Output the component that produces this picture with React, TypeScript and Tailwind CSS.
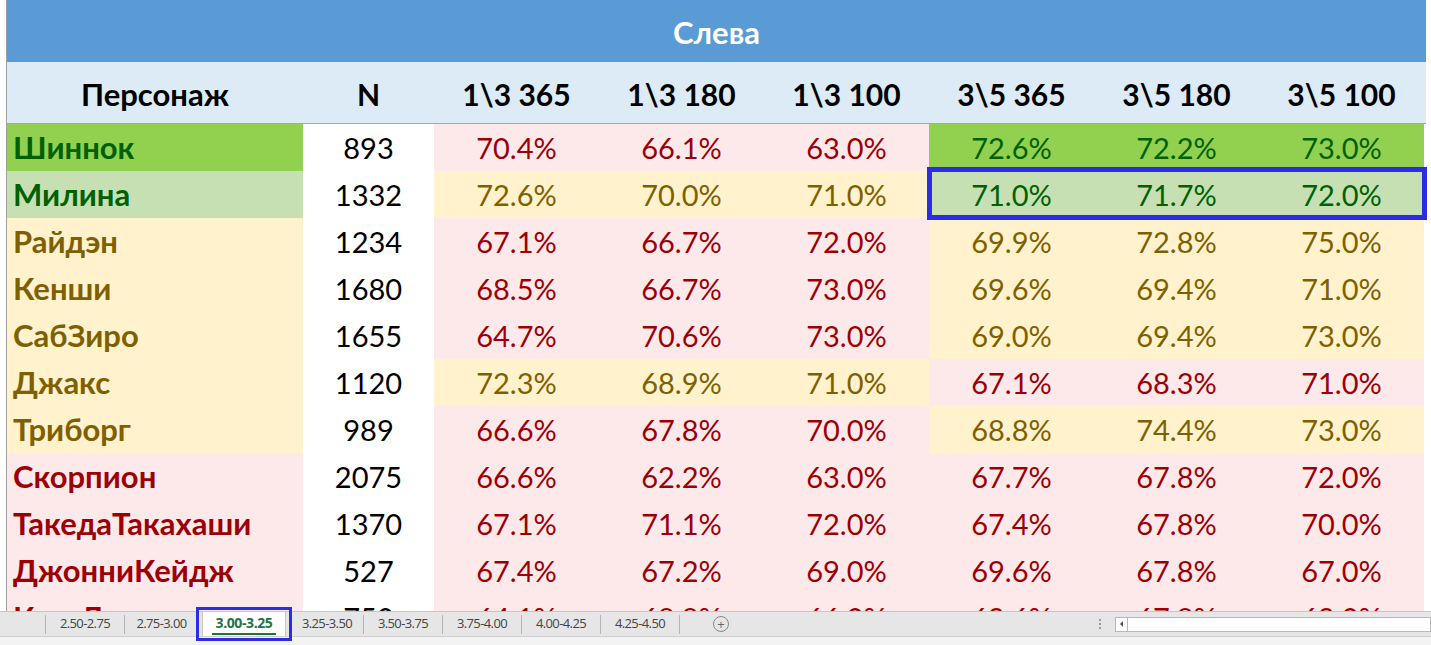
import React from "react";

type Tone = "dg" | "lg" | "y" | "p";

const toneClass: Record<Tone, string> = {
  dg: "bg-[#92d050] text-[#006100]",
  lg: "bg-[#c6e0b4] text-[#006100]",
  y: "bg-[#fff2cc] text-[#7f6000]",
  p: "bg-[#fde9e9] text-[#9c0006]",
};

const columns = ["1\\3 365", "1\\3 180", "1\\3 100", "3\\5 365", "3\\5 180", "3\\5 100"];

const rows: { name: string; tone: Tone; n: string; a: Tone; b: Tone; vals: string[] }[] = [
  { name: "Шиннок", tone: "dg", n: "893", a: "p", b: "dg", vals: ["70.4%", "66.1%", "63.0%", "72.6%", "72.2%", "73.0%"] },
  { name: "Милина", tone: "lg", n: "1332", a: "y", b: "lg", vals: ["72.6%", "70.0%", "71.0%", "71.0%", "71.7%", "72.0%"] },
  { name: "Райдэн", tone: "y", n: "1234", a: "p", b: "y", vals: ["67.1%", "66.7%", "72.0%", "69.9%", "72.8%", "75.0%"] },
  { name: "Кенши", tone: "y", n: "1680", a: "p", b: "y", vals: ["68.5%", "66.7%", "73.0%", "69.6%", "69.4%", "71.0%"] },
  { name: "СабЗиро", tone: "y", n: "1655", a: "p", b: "y", vals: ["64.7%", "70.6%", "73.0%", "69.0%", "69.4%", "73.0%"] },
  { name: "Джакс", tone: "y", n: "1120", a: "y", b: "p", vals: ["72.3%", "68.9%", "71.0%", "67.1%", "68.3%", "71.0%"] },
  { name: "Триборг", tone: "y", n: "989", a: "p", b: "y", vals: ["66.6%", "67.8%", "70.0%", "68.8%", "74.4%", "73.0%"] },
  { name: "Скорпион", tone: "p", n: "2075", a: "p", b: "p", vals: ["66.6%", "62.2%", "63.0%", "67.7%", "67.8%", "72.0%"] },
  { name: "ТакедаТакахаши", tone: "p", n: "1370", a: "p", b: "p", vals: ["67.1%", "71.1%", "72.0%", "67.4%", "67.8%", "70.0%"] },
  { name: "ДжонниКейдж", tone: "p", n: "527", a: "p", b: "p", vals: ["67.4%", "67.2%", "69.0%", "69.6%", "67.8%", "67.0%"] },
  { name: "КунгЛао", tone: "p", n: "750", a: "p", b: "p", vals: ["64.1%", "68.8%", "66.0%", "69.6%", "67.8%", "69.0%"] },
];

// sheet tabs with their widths in the bar
const tabs = [
  { label: "2.50-2.75", w: "w-[79px]" },
  { label: "2.75-3.00", w: "w-[74px]" },
  { label: "3.00-3.25", w: "w-[92px]", active: true },
  { label: "3.25-3.50", w: "w-[73px]" },
  { label: "3.50-3.75", w: "w-[79px]" },
  { label: "3.75-4.00", w: "w-[79px]" },
  { label: "4.00-4.25", w: "w-[79px]" },
  { label: "4.25-4.50", w: "w-[79px]" },
];

const gridCols = "grid grid-cols-[296px_131px_repeat(6,165px)]";

export default function App() {
  return (
    <div className="w-[1431px] h-[645px] bg-white overflow-hidden flex flex-col font-['Lato',sans-serif]">
      <div className="h-[611px] overflow-hidden pl-[6px]">
        <div className="relative w-[1420px] border-l border-[#a0a0a0]">
          <div className="h-[62px] pt-[3px] bg-[#5b9bd5] flex items-center justify-center text-white font-bold text-[31px]">
            Слева
          </div>
          <div className={`${gridCols} h-[62px] pt-[3px] bg-[#ddebf7] border-b border-[#a6a6a6] items-center text-center font-bold text-[30px] text-black`}>
            <div className="text-[31px]">Персонаж</div>
            <div>N</div>
            {columns.map((c) => (
              <div key={c}>{c}</div>
            ))}
          </div>
          {rows.map((r) => (
            <div key={r.name} className={`${gridCols} h-[47px] text-[29px]`}>
              <div className={`${toneClass[r.tone]} flex items-center pl-[6px] font-bold text-[31px]`}>{r.name}</div>
              <div className="bg-white flex items-center justify-center text-black">{r.n}</div>
              {r.vals.map((v, i) => (
                <div key={i} className={`${toneClass[i < 3 ? r.a : r.b]} flex items-center justify-center`}>
                  {v}
                </div>
              ))}
            </div>
          ))}
          <div className="absolute left-[920px] top-[167px] w-[500px] h-[53px] border-[5px] border-[#2a2ee0]" />
        </div>
      </div>

      <div className="h-[34px] bg-[#f3f3f3] border-t border-[#c6c6c6]">
        <div className="h-[25px] bg-[#e6e6e6] border-b border-[#d0d0d0] flex items-center text-[13px] text-[#444] font-['Open_Sans',sans-serif]">
          <div className="w-[45px] h-full" />
          {tabs.map((t) =>
            t.active ? (
              <div key={t.label} className={`relative h-full ${t.w} flex items-center justify-center`}>
                <div className="absolute -top-[5px] -left-[2px] w-[96px] h-[34px] border-[3px] border-[#2a2ee0]" />
                <div className="h-[24px] -mt-[1px] w-[84px] bg-white border-x border-[#c6c6c6] flex items-center justify-center font-bold text-[#217346] text-[14px] tracking-[-0.4px]">
                  <span className="border-b-2 border-[#217346] leading-[20px] px-[4px]">{t.label}</span>
                </div>
              </div>
            ) : (
              <div key={t.label} className={`h-[19px] ${t.w} border-l border-[#b5b5b5] flex items-center justify-center tracking-[-0.6px]`}>
                {t.label}
              </div>
            )
          )}
          <div className="h-[19px] border-l border-[#b5b5b5]" />
          <div className="ml-[33px] w-[16px] h-[16px] rounded-full border border-[#888] flex items-center justify-center text-[#666] text-[13px] leading-none">
            +
          </div>
          <div className="ml-auto mr-[14px] flex flex-col gap-[2px]">
            <span className="w-[2px] h-[2px] bg-[#999]" />
            <span className="w-[2px] h-[2px] bg-[#999]" />
            <span className="w-[2px] h-[2px] bg-[#999]" />
          </div>
          <div className="w-[316px] h-[15px] bg-white border border-[#b9b9b9] flex items-center">
            <div className="w-[12px] h-full border-r border-[#b9b9b9] flex items-center justify-center">
              <span className="w-0 h-0 border-y-[3px] border-y-transparent border-r-[3px] border-r-[#555]" />
            </div>
          </div>
        </div>
      </div>
    </div>
  );
}
